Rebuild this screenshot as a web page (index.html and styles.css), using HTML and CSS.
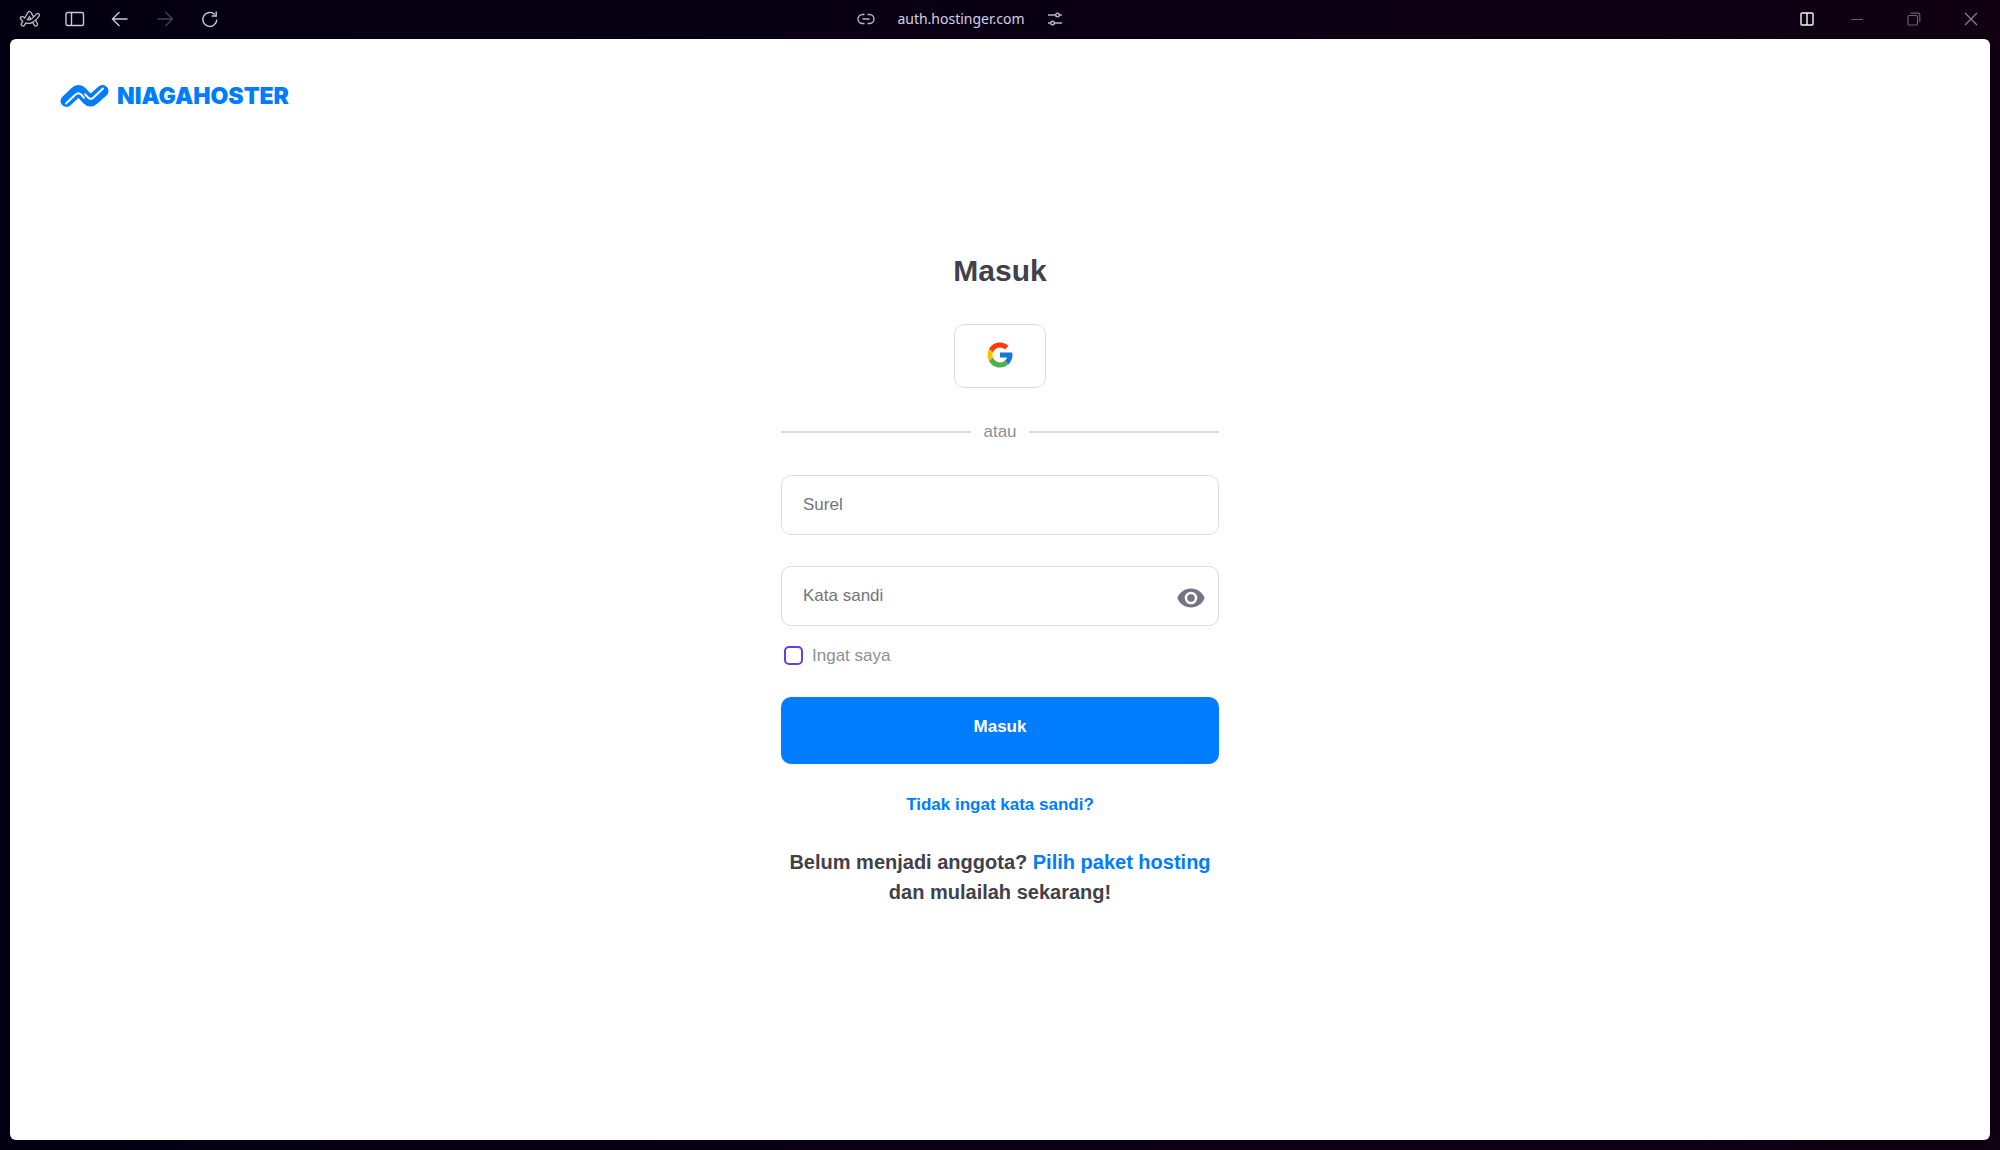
FILE: index.html
```html
<!DOCTYPE html>
<html lang="id">
<head>
<meta charset="utf-8">
<title>Masuk - Niagahoster</title>
<link rel="stylesheet" href="styles.css">
</head>
<body>
<header class="toolbar">
  <div class="toolbar-group">
    <button class="tool" aria-label="Arc"><svg width="22" height="18" viewBox="0 0 22 18" fill="none" stroke-linecap="round" stroke-linejoin="round"><path stroke="#b9b6ba" stroke-width="4.800" d="M4 14.200L10.500 3.200L16.800 14.200M3.200 8.200Q9.500 16.500 18.600 5.200"/><path stroke="#05020f" stroke-width="2.200" d="M4 14.200L10.500 3.200L16.800 14.200"/><path stroke="#b9b6ba" stroke-width="4.400" stroke-linecap="butt" d="M7 11.300Q11.500 12.800 15.600 8.500"/><path stroke="#05020f" stroke-width="2.200" d="M3.200 8.200Q9.500 16.500 18.600 5.200"/></svg></button>
    <button class="tool" aria-label="Bilah sisi"><svg width="20" height="16" viewBox="0 0 20 16" fill="none" stroke="#c9c8de" stroke-width="1.400"><rect x="1" y="1.500" width="17.500" height="13" rx="1.500"/><path d="M6.500 1.500v13"/></svg></button>
    <button class="tool" aria-label="Kembali"><svg width="18" height="16" viewBox="0 0 18 16" fill="none" stroke="#c9c8de" stroke-width="1.400"><path d="M16.500 8H2M8.500 1L1.500 8l7 7"/></svg></button>
    <button class="tool" aria-label="Maju"><svg width="18" height="16" viewBox="0 0 18 16" fill="none" stroke="#46434f" stroke-width="1.400"><path d="M1.500 8H16M9.500 1l7 7l-7 7"/></svg></button>
    <button class="tool" aria-label="Muat ulang"><svg width="18" height="18" viewBox="0 0 18 18" fill="none" stroke="#c9c8de" stroke-width="1.400"><path d="M15.800 9.500A7 7 0 1 1 13.800 4.500M15.200 1.500v4.500h-4.500"/></svg></button>
  </div>
  <div class="address">
    <svg width="18" height="12" viewBox="0 0 18 12" fill="none" stroke="#b4b3c8" stroke-width="1.400"><path d="M7.500 1.500H5.500a4.500 4.500 0 0 0 0 9h2M10.500 1.500h2a4.500 4.500 0 0 1 0 9h-2M5.500 6h7"/></svg>
    <span class="url">auth.hostinger.com</span>
    <svg width="16" height="14" viewBox="0 0 16 14" fill="none" stroke="#b4b3c8" stroke-width="1.400"><path d="M1 3h7.500M12.500 3H15M1 11h2.500M7.500 11H15"/><circle cx="10.500" cy="3" r="1.800"/><circle cx="5.500" cy="11" r="1.800"/></svg>
  </div>
  <div class="toolbar-group window-controls">
    <button class="tool" aria-label="Tampilan terbagi"><svg width="14" height="14" viewBox="0 0 14 14" fill="none" stroke="#f4f2f8" stroke-width="1.400"><rect x="1" y="1" width="12" height="12" rx="1"/><path d="M7 1v12"/></svg></button>
    <button class="tool" aria-label="Kecilkan"><svg width="14" height="14" viewBox="0 0 14 14" stroke="#665f69"><path d="M1 7.500h12"/></svg></button>
    <button class="tool" aria-label="Pulihkan"><svg width="14" height="14" viewBox="0 0 14 14" fill="none" stroke="#665f69" stroke-width="1.200"><rect x="1" y="3.500" width="9.500" height="9.500" rx="1"/><path d="M3.500 1.200H11q1.800 0 1.800 1.800V10"/></svg></button>
    <button class="tool" aria-label="Tutup"><svg width="14" height="14" viewBox="0 0 14 14" stroke="#88828b" stroke-width="1.200"><path d="M1 1l12 12M13 1L1 13"/></svg></button>
  </div>
</header>
<main class="page">
  <a class="logo" href="#" aria-label="Niagahoster">
    <svg width="49" height="24" viewBox="0 0 49 24" fill="none" stroke-linecap="round" stroke-linejoin="round"><path stroke="#007cff" stroke-width="12" d="M6.500 17L15.500 8.500Q18.500 5.500 21.500 8.500L27.500 15Q30.500 18 33.500 15L42.500 7"/><path stroke="#fff" stroke-width="2" d="M6 19.500L15.500 10.600Q18.500 8 21 10.500L24 13.800M43 4.500L33.500 13.400Q30.500 16 28 13.500L25 10.200"/></svg>
    <span class="logo-name">NIAGAHOSTER</span>
  </a>
  <form class="login">
    <h1 class="title">Masuk</h1>
    <button class="google" type="button" aria-label="Google"><svg width="30" height="30" viewBox="0 0 48 48"><path fill="#1976d2" d="M43.611 20.083H24v8h11.303a12.040 12.040 0 0 1-4.087 5.571l6.190 5.238C36.971 39.205 44 34 44 24c0-1.341-.138-2.650-.389-3.917z"/><path fill="#ff3d00" d="m6.306 14.691 6.571 4.819C14.655 15.108 18.961 12 24 12c3.059 0 5.842 1.154 7.961 3.039l5.657-5.657C34.046 6.053 29.268 4 24 4 16.318 4 9.656 8.337 6.306 14.691z"/><path fill="#4caf50" d="M24 44c5.166 0 9.860-1.977 13.409-5.192l-6.190-5.238A11.910 11.910 0 0 1 24 36c-5.202 0-9.619-3.317-11.283-7.946l-6.522 5.025C9.505 39.556 16.227 44 24 44z"/><path fill="#ffc107" d="M6.306 14.691A19.900 19.900 0 0 0 4 24c0 3.270.79 6.350 2.195 9.079l6.522-5.025A12 12 0 0 1 12.877 19.510z"/></svg></button>
    <div class="divider">atau</div>
    <input class="field" type="email" placeholder="Surel" aria-label="Surel">
    <div class="password">
      <input class="field" type="password" placeholder="Kata sandi" aria-label="Kata sandi">
      <button class="reveal" type="button" aria-label="Tampilkan kata sandi"><svg width="28" height="20" viewBox="0 0 28 20"><path fill="#727586" fill-rule="evenodd" d="M14 .5C7.700 .5 2.400 4.400 .3 10c2.100 5.600 7.400 9.500 13.700 9.500S25.600 15.600 27.700 10C25.600 4.400 20.300 .5 14 .5zM14 16.300a6.300 6.300 0 1 1 0-12.600a6.300 6.300 0 0 1 0 12.600zM14 6.200a3.800 3.800 0 1 0 0 7.600a3.800 3.800 0 0 0 0-7.600z"/></svg></button>
    </div>
    <label class="remember"><input class="check" type="checkbox">Ingat saya</label>
    <button class="submit" type="submit">Masuk</button>
    <a class="forgot" href="#">Tidak ingat kata sandi?</a>
    <p class="signup">Belum menjadi anggota? <a class="plan" href="#">Pilih paket hosting</a> dan mulailah sekarang!</p>
  </form>
</main>
</body>
</html>
```
FILE: styles.css
```css
* { box-sizing: border-box; }

body {
  margin: 0;
  min-height: 100vh;
  padding: 0 10px 10px;
  display: flex;
  flex-direction: column;
  background: linear-gradient(90deg, #030011, #0a0014 50%, #100012);
  font-family: "Liberation Sans", Arial, sans-serif;
  font-size: 17px;
}

button { font: inherit; border: 0; padding: 0; background: none; cursor: pointer; }
a { color: #007cff; text-decoration: none; }
svg { display: block; }

.toolbar {
  height: 39px;
  padding-bottom: 2px;
  display: grid;
  grid-template-columns: 1fr auto 1fr;
  align-items: center;
}
.toolbar-group { display: flex; gap: 23px; padding-left: 9px; }
.tool { width: 22px; height: 22px; display: grid; place-items: center; }
.window-controls { justify-content: flex-end; gap: 35px; padding-right: 8px; }
.window-controls .tool:first-child { margin-right: -7px; }
.address { display: flex; align-items: center; gap: 22px; padding-right: 80px; }
.url { font: 14px/20px "Noto Sans", sans-serif; color: #d2d0e6; }

.page {
  flex: 1;
  display: flex;
  flex-direction: column;
  padding: 44px 50px;
  background: #fff;
  border-radius: 6px;
}
.logo { display: flex; align-items: center; gap: 8px; height: 26px; align-self: flex-start; }
.logo-name { font: 900 23px/26px Inter, sans-serif; }

.login {
  width: 438px;
  max-width: 100%;
  margin: 141px auto 0;
  display: flex;
  flex-direction: column;
}
.title { margin: 0 0 32px; font-size: 30px; line-height: 42px; text-align: center; color: #414149; }
.google {
  width: 92px;
  height: 64px;
  padding-bottom: 2px;
  align-self: center;
  display: grid;
  place-items: center;
  border: 1px solid #dadce0;
  border-radius: 10px;
}
.divider { display: flex; align-items: center; gap: 12px; margin: 31px 0; line-height: 25px; color: #8f8f94; }
.divider::before, .divider::after { content: ""; flex: 1; height: 2px; background: #dadce0; }
.field {
  width: 100%;
  height: 60px;
  padding: 0 21px;
  border: 1px solid #dadce0;
  border-radius: 10px;
  font: inherit;
}
.field::placeholder { color: #757575; }
.password { position: relative; margin-top: 31px; }
.reveal { position: absolute; right: 14px; top: 22px; }
.remember { display: flex; align-items: center; gap: 9px; margin-top: 17px; padding-left: 3px; line-height: 25px; color: #8f8f94; }
.check { appearance: none; width: 19px; height: 19px; margin: 0; border: 2px solid #673de6; border-radius: 5px; }
.submit {
  height: 67px;
  margin-top: 29px;
  padding-bottom: 7px;
  border-radius: 10px;
  background: #007cff;
  color: #fff;
  font-weight: 700;
}
.forgot { align-self: center; margin-top: 29px; line-height: 24px; font-weight: 700; }
.signup { margin: 30px 0 0; font-size: 20px; line-height: 30px; font-weight: 700; text-align: center; color: #414149; }
```
